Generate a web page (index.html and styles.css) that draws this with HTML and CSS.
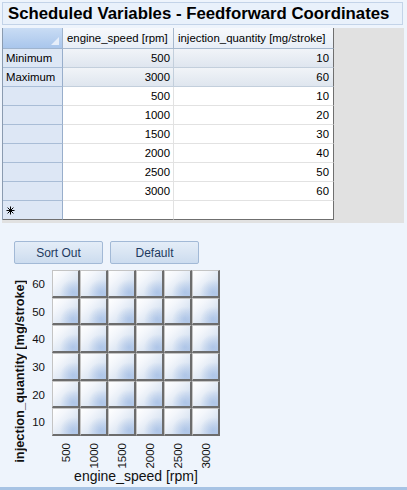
FILE: index.html
```html
<!DOCTYPE html>
<html>
<head>
<meta charset="utf-8">
<link rel="stylesheet" href="styles.css">
</head>
<body>
<div class="page">
  <div class="title">Scheduled Variables - Feedforward Coordinates</div>
  <div class="panel">
    <div class="grid">
      <div class="c corner"><span class="tri"></span></div>
      <div class="c colh">engine_speed [rpm]</div>
      <div class="c colh last">injection_quantity [mg/stroke]</div>

      <div class="c rowh">Minimum</div>
      <div class="c lim">500</div>
      <div class="c lim last">10</div>

      <div class="c rowh">Maximum</div>
      <div class="c lim">3000</div>
      <div class="c lim last">60</div>

      <div class="c rowh"></div><div class="c d">500</div><div class="c d last">10</div>
      <div class="c rowh"></div><div class="c d">1000</div><div class="c d last">20</div>
      <div class="c rowh"></div><div class="c d">1500</div><div class="c d last">30</div>
      <div class="c rowh"></div><div class="c d">2000</div><div class="c d last">40</div>
      <div class="c rowh"></div><div class="c d">2500</div><div class="c d last">50</div>
      <div class="c rowh"></div><div class="c d">3000</div><div class="c d last">60</div>

      <div class="c rowh newrow"><svg class="star" width="9" height="9" viewBox="0 0 9 9"><path d="M4.5 0.5V8.5M0.5 4.5H8.5M1.6 1.6L7.4 7.4M7.4 1.6L1.6 7.4" stroke="#000" stroke-width="1"/></svg></div>
      <div class="c d bottom"></div>
      <div class="c d last bottom"></div>
    </div>
  </div>

  <div class="buttons">
    <button class="btn">Sort Out</button>
    <button class="btn">Default</button>
  </div>

  <div class="chart">
    <div class="ytitle"><span class="rot">injection_quantity [mg/stroke]</span></div>
    <div class="yticks">
      <span>60</span><span>50</span><span>40</span><span>30</span><span>20</span><span>10</span>
    </div>
    <div class="plot">
      <div class="t"></div><div class="t"></div><div class="t"></div><div class="t"></div><div class="t"></div><div class="t"></div>
      <div class="t"></div><div class="t"></div><div class="t"></div><div class="t"></div><div class="t"></div><div class="t"></div>
      <div class="t"></div><div class="t"></div><div class="t"></div><div class="t"></div><div class="t"></div><div class="t"></div>
      <div class="t"></div><div class="t"></div><div class="t"></div><div class="t"></div><div class="t"></div><div class="t"></div>
      <div class="t"></div><div class="t"></div><div class="t"></div><div class="t"></div><div class="t"></div><div class="t"></div>
      <div class="t"></div><div class="t"></div><div class="t"></div><div class="t"></div><div class="t"></div><div class="t"></div>
    </div>
    <div class="xticks">
      <div class="xt"><span class="rot">500</span></div>
      <div class="xt"><span class="rot">1000</span></div>
      <div class="xt"><span class="rot">1500</span></div>
      <div class="xt"><span class="rot">2000</span></div>
      <div class="xt"><span class="rot">2500</span></div>
      <div class="xt"><span class="rot">3000</span></div>
    </div>
    <div class="xtitle">engine_speed [rpm]</div>
  </div>
</div>
</body>
</html>
```

FILE: styles.css
```css
* { box-sizing: border-box; }
html, body { margin: 0; padding: 0; }
body {
  width: 407px;
  height: 490px;
  overflow: hidden;
  font-family: "Liberation Sans", Arial, sans-serif;
  background: #eef4fc;
}
.page {
  height: 490px;
  border-bottom: 3px solid #a7c3e4;
  padding-top: 2px;
}
.title {
  margin: 0 4px 0 2px;
  height: 23px;
  border: 1px solid #c3d3e8;
  background: #e9f1fb;
  font-weight: bold;
  font-size: 16.8px;
  line-height: 21px;
  padding-left: 5px;
  color: #000;
  white-space: nowrap;
}
.panel {
  margin: 3px 3px 0 2px;
  height: 195px;
  background: #e1e1e1;
}
.grid {
  display: grid;
  grid-template-columns: 60px 111px 160px;
  grid-template-rows: 21px repeat(9, 19px);
  width: 331px;
  font-size: 11.4px;
  color: #000;
  border-left: 1px solid #8a9bb0;
}
.c {
  border-right: 1px solid #e2e2e2;
  border-bottom: 1px solid #e2e2e2;
  line-height: 18px;
  white-space: nowrap;
  overflow: hidden;
}
.c.last { border-right: 1px solid #6f6f6f; }
.corner {
  position: relative;
  background: linear-gradient(#c9dcf4, #a9c6ec);
  border-right: 1px solid #9fb4ce;
  border-bottom: 1px solid #9fb4ce;
}
.tri {
  position: absolute;
  right: 3px;
  bottom: 3px;
  width: 0;
  height: 0;
  border-left: 8px solid transparent;
  border-bottom: 8px solid #e6eefa;
}
.colh {
  background: linear-gradient(#f7f9fc, #e7eef7);
  border-right: 1px solid #a6b8cd;
  border-bottom: 1px solid #a6b8cd;
  padding-left: 4px;
  line-height: 20px;
}
.colh.last { border-right: 1px solid #6f6f6f; }
.rowh {
  background: #dde7f5;
  border-right: 1px solid #98aecb;
  border-bottom: 1px solid #a9bdd6;
  padding-left: 3px;
}
.lim {
  background: linear-gradient(#f1f4f8, #dfe6ef);
  border-right: 1px solid #c3cfdc;
  border-bottom: 1px solid #c3cfdc;
  text-align: right;
  padding-right: 3px;
}
.d {
  background: #fff;
  text-align: right;
  padding-right: 3px;
}
.c.last.lim, .c.last.d { padding-right: 4px; }
.bottom { border-bottom: 1px solid #6f6f6f; }
.newrow { border-bottom: 1px solid #6f6f6f; display: flex; align-items: center; padding-left: 3px; }
.star { display: block; }

.buttons {
  display: flex;
  gap: 7px;
  margin: 18px 0 0 14px;
}
.btn {
  width: 89px;
  height: 23px;
  border: 1px solid #a2b9d6;
  border-radius: 2px;
  background: linear-gradient(#e4edf8 0%, #d9e5f3 50%, #ccdcef 100%);
  color: #1e3a5f;
  font-family: "Liberation Sans", Arial, sans-serif;
  font-size: 12px;
  padding: 0;
}

.chart {
  display: grid;
  grid-template-columns: 22px 22px 168px;
  grid-template-rows: 166px 31px 20px;
  margin: 6px 0 0 8px;
  color: #111;
}
.rot {
  writing-mode: vertical-rl;
  transform: rotate(180deg);
  white-space: nowrap;
}
.ytitle {
  grid-column: 1;
  grid-row: 1 / 3;
  display: flex;
  align-items: center;
  justify-content: center;
  font-size: 12.8px;
  font-weight: bold;
  padding-top: 6px;
}
.yticks {
  grid-column: 2;
  grid-row: 1;
  display: flex;
  flex-direction: column;
  font-size: 11.5px;
}
.yticks span {
  flex: 1;
  display: flex;
  align-items: center;
  justify-content: flex-end;
  padding-right: 7px;
}
.plot {
  grid-column: 3;
  grid-row: 1;
  display: grid;
  grid-template-columns: repeat(6, 1fr);
  grid-template-rows: repeat(6, 1fr);
}
.t {
  border-top: 1px solid #c4c4c4;
  border-left: 1px solid #c4c4c4;
  border-right: 2px solid #6c6c6c;
  border-bottom: 2px solid #6c6c6c;
  background:
    radial-gradient(circle at 80% 85%, rgba(150,180,225,0.55) 0, rgba(150,180,225,0) 45%),
    linear-gradient(135deg, #ffffff 0%, #f3f6fb 30%, #dfe8f4 60%, #cbdaef 85%, #bccfea 100%);
}
.xticks {
  grid-column: 3;
  grid-row: 2;
  display: grid;
  grid-template-columns: repeat(6, 1fr);
  font-size: 11.5px;
}
.xt {
  display: flex;
  justify-content: center;
  align-items: flex-start;
  padding-top: 7px;
}
.xtitle {
  grid-column: 3;
  grid-row: 3;
  text-align: center;
  font-size: 14px;
  line-height: 19px;
  white-space: nowrap;
}
```
